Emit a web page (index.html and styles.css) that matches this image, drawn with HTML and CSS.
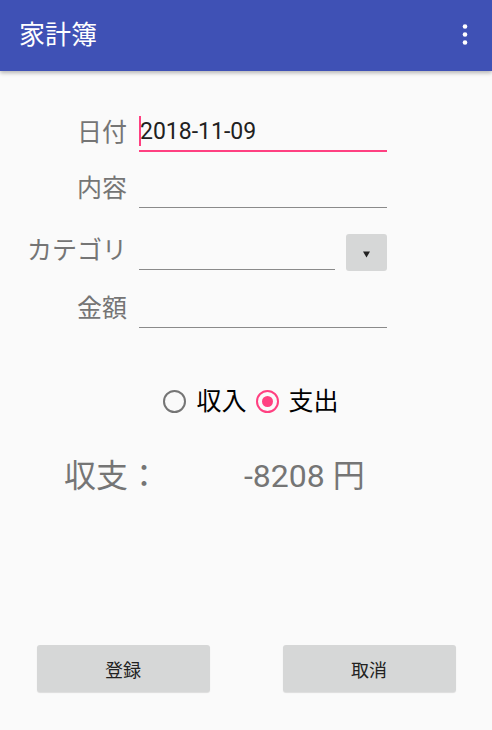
FILE: index.html
```html
<!DOCTYPE html>
<html lang="ja">
<head>
<meta charset="utf-8">
<title>家計簿</title>
<link rel="stylesheet" href="styles.css">
</head>
<body>
<header class="appbar">
  <h1 class="appbar-title">家計簿</h1>
  <svg class="overflow" width="10" height="26" viewBox="0 0 10 26">
    <circle cx="5" cy="4.5" r="2.3" fill="#fff"/>
    <circle cx="5" cy="12.5" r="2.3" fill="#fff"/>
    <circle cx="5" cy="20.5" r="2.3" fill="#fff"/>
  </svg>
</header>
<main class="content">
  <div class="form">
    <label class="label row1">日付</label>
    <div class="field focused row1"><span class="caret"></span><span class="value">2018-11-09</span></div>

    <label class="label row2">内容</label>
    <div class="field row2"></div>

    <label class="label row3">カテゴリ</label>
    <div class="category row3">
      <div class="field grow"></div>
      <div class="spinner">
        <svg width="9" height="7" viewBox="0 0 9 7"><path d="M1 0.5 L8 0.5 L4.5 6.5 Z" fill="#222"/></svg>
      </div>
    </div>

    <label class="label row4">金額</label>
    <div class="field row4"></div>
  </div>

  <div class="radios">
    <span class="radio"></span><span class="radio-text">収入</span>
    <span class="radio checked"></span><span class="radio-text">支出</span>
  </div>

  <div class="result">
    <span class="result-label">収支：</span>
    <span class="result-value">-8208 円</span>
  </div>
</main>
<footer class="buttons">
  <button class="btn">登録</button>
  <button class="btn">取消</button>
</footer>
</body>
</html>
```

FILE: styles.css
```css
html, body {
  margin: 0;
  padding: 0;
}
body {
  width: 492px;
  height: 730px;
  background: #fafafa;
  font-family: Roboto, "Noto Sans CJK JP", sans-serif;
  display: flex;
  flex-direction: column;
  overflow: hidden;
}
.appbar {
  height: 71px;
  flex: none;
  background: #3f51b5;
  display: flex;
  align-items: center;
  justify-content: space-between;
  padding: 0 22px 0 19px;
  box-shadow: 0 2px 4px rgba(0,0,0,0.28);
  position: relative;
  z-index: 1;
}
.appbar-title {
  margin: 0;
  color: #fff;
  font-size: 26px;
  font-weight: 400;
  line-height: 1;
  padding-bottom: 1px;
}
.overflow {
  display: block;
  margin-top: -1px;
}
.content {
  flex: 1;
}
.form {
  display: grid;
  grid-template-columns: 126px 248px;
  column-gap: 13px;
  padding-top: 41px;
}
.label {
  justify-self: end;
  align-self: center;
  font-size: 25px;
  color: #757575;
  line-height: 1;
  margin-right: -1px;
}
.field {
  height: 40px;
  box-sizing: border-box;
  border-bottom: 1px solid #8a8a8a;
  display: flex;
  align-items: center;
}
.field.focused {
  border-bottom: 2px solid #ff4081;
}
.row2 { margin-top: 16px; }
.row3 { margin-top: 22px; }
.row4 { margin-top: 18px; }
.caret {
  width: 2px;
  height: 30px;
  background: #ff4081;
  margin-right: -1px;
}
.value {
  font-size: 23px;
  color: #212121;
  line-height: 1;
  margin-top: 1px;
}
.category {
  display: flex;
  align-items: flex-end;
  gap: 11px;
}
.grow { flex: 1; }
.spinner {
  width: 41px;
  height: 37px;
  background: #d6d7d7;
  border-radius: 3px;
  display: flex;
  align-items: center;
  justify-content: center;
  margin-bottom: -1px;
}
.spinner svg { display: block; margin-top: 3px; }
.radios {
  display: flex;
  align-items: center;
  justify-content: center;
  padding-left: 10px;
  margin-top: 58px;
  height: 30px;
}
.radio {
  width: 23px;
  height: 23px;
  box-sizing: border-box;
  border: 2.4px solid #757575;
  border-radius: 50%;
  display: flex;
  align-items: center;
  justify-content: center;
  margin-right: 10px;
}
.radio.checked {
  border-color: #ff4081;
  margin-left: 9px;
}
.radio.checked::after {
  content: "";
  width: 11px;
  height: 11px;
  border-radius: 50%;
  background: #ff4081;
}
.radio-text {
  font-size: 25px;
  color: #000;
  line-height: 1;
}
.result {
  display: flex;
  align-items: center;
  padding-left: 64px;
  margin-top: 44px;
  font-size: 32px;
  color: #757575;
  line-height: 1;
}
.result-label {
  width: 180px;
}
.buttons {
  flex: none;
  display: grid;
  grid-template-columns: 1fr 1fr;
  justify-items: center;
  padding-bottom: 38px;
}
.btn {
  width: 173px;
  height: 47px;
  border: none;
  border-radius: 3px;
  background: #d6d7d7;
  box-shadow: 0 1px 1px rgba(0,0,0,0.12);
  font-family: Roboto, "Noto Sans CJK JP", sans-serif;
  font-size: 18px;
  color: #222;
  padding: 0;
}
```
